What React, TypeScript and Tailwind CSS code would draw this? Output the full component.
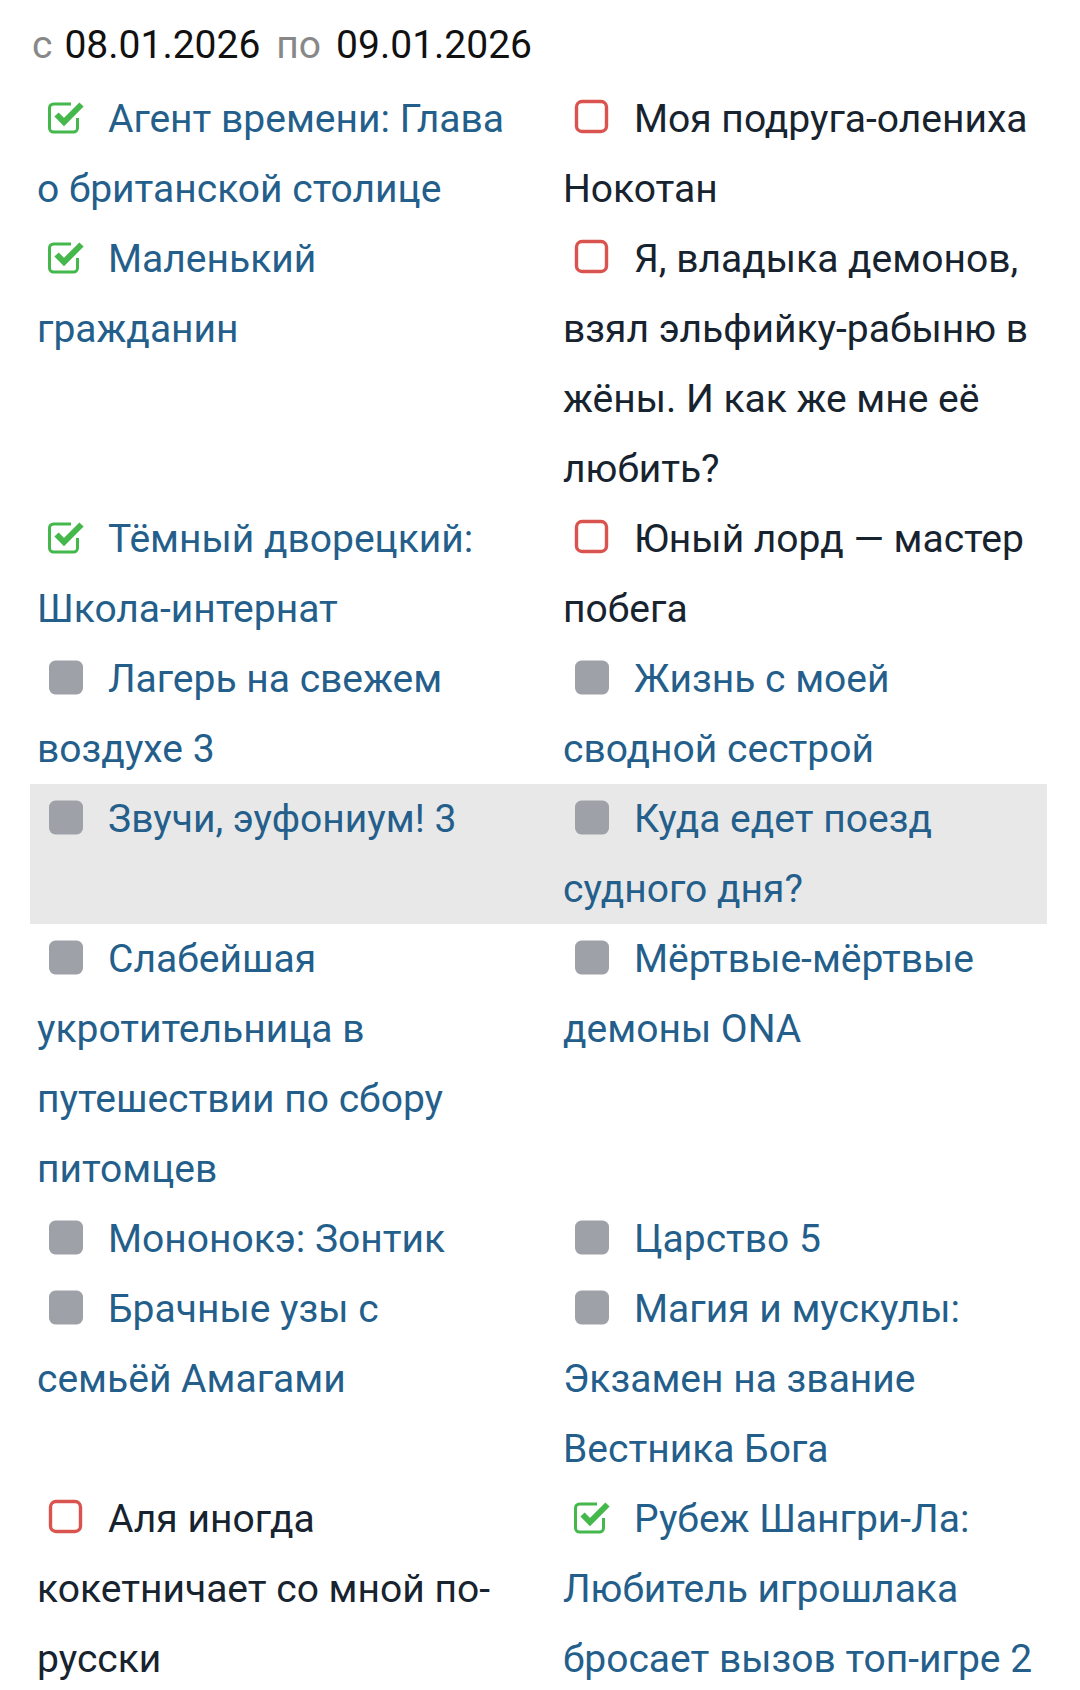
type Mark = 'done' | 'todo' | 'none';

interface Item {
  title: string;
  mark: Mark;
}

const rows: { left: Item; right: Item; hl?: boolean }[] = [
  {
    left: { title: 'Агент времени: Глава о британской столице', mark: 'done' },
    right: { title: 'Моя подруга-олениха Нокотан', mark: 'todo' },
  },
  {
    left: { title: 'Маленький гражданин', mark: 'done' },
    right: { title: 'Я, владыка демонов, взял эльфийку-рабыню в жёны. И как же мне её любить?', mark: 'todo' },
  },
  {
    left: { title: 'Тёмный дворецкий: Школа-интернат', mark: 'done' },
    right: { title: 'Юный лорд — мастер побега', mark: 'todo' },
  },
  {
    left: { title: 'Лагерь на свежем воздухе 3', mark: 'none' },
    right: { title: 'Жизнь с моей сводной сестрой', mark: 'none' },
  },
  {
    left: { title: 'Звучи, эуфониум! 3', mark: 'none' },
    right: { title: 'Куда едет поезд судного дня?', mark: 'none' },
    hl: true,
  },
  {
    left: { title: 'Слабейшая укротительница в путешествии по сбору питомцев', mark: 'none' },
    right: { title: 'Мёртвые-мёртвые демоны ONA', mark: 'none' },
  },
  {
    left: { title: 'Мононокэ: Зонтик', mark: 'none' },
    right: { title: 'Царство 5', mark: 'none' },
  },
  {
    left: { title: 'Брачные узы с семьёй Амагами', mark: 'none' },
    right: { title: 'Магия и мускулы: Экзамен на звание Вестника Бога', mark: 'none' },
  },
  {
    left: { title: 'Аля иногда кокетничает со мной по-русски', mark: 'todo' },
    right: { title: 'Рубеж Шангри-Ла: Любитель игрошлака бросает вызов топ-игре 2', mark: 'done' },
  },
];

const MarkIcon = ({ mark }: { mark: Mark }) => {
  if (mark === 'done') {
    return (
      <svg width="36" height="36" viewBox="0 0 36 36" className="inline-block align-middle -mt-[9px]">
        <path
          d="M29.5 19 V29 a4 4 0 0 1 -4 4 H5.5 a4 4 0 0 1 -4 -4 V9 a4 4 0 0 1 4 -4 H23"
          fill="none"
          stroke="#45b84c"
          strokeWidth="3"
        />
        <polyline points="8.5,15.5 16,23 33.5,5.5" fill="none" stroke="#45b84c" strokeWidth="6" />
      </svg>
    );
  }
  if (mark === 'todo') {
    return (
      <svg width="36" height="36" viewBox="0 0 36 36" className="inline-block align-middle -mt-[9px]">
        <rect x="2.5" y="2.5" width="30" height="30" rx="5.5" fill="none" stroke="#d9534f" strokeWidth="3.4" />
      </svg>
    );
  }
  return (
    <svg width="36" height="36" viewBox="0 0 36 36" className="inline-block align-middle -mt-[8px]">
      <rect x="1" y="0.5" width="34" height="34" rx="6.5" fill="#9ea2a8" />
    </svg>
  );
};

const Cell = ({ item, side }: { item: Item; side: 'l' | 'r' }) => (
  <div className={side === 'l' ? 'pl-[7px] pr-[40px]' : 'px-[7px]'}>
    <span className="ml-[11px]">
      <MarkIcon mark={item.mark} />
    </span>
    <span className={`ml-[24px] ${item.mark === 'todo' ? 'text-[#17232e]' : 'text-[#245f8c]'}`}>{item.title}</span>
  </div>
);

export default function App() {
  return (
    <div className="min-h-screen bg-white font-['Roboto','Liberation_Sans',sans-serif] text-[39px] leading-[70px]">
      <div className="pt-[10px] pl-[32px] h-[84px]">
        <span className="text-[#888888]">с</span>
        <span className="ml-[12px] text-[#111111]">08.01.2026</span>
        <span className="ml-[16px] text-[#888888]">по</span>
        <span className="ml-[15px] text-[#111111]">09.01.2026</span>
      </div>
      <div className="ml-[30px] w-[1017px]">
        {rows.map((r, i) => (
          <div key={i} className={`grid grid-cols-[526px_491px] ${r.hl ? 'bg-[#e8e8e8]' : ''}`}>
            <Cell item={r.left} side="l" />
            <Cell item={r.right} side="r" />
          </div>
        ))}
      </div>
    </div>
  );
}
